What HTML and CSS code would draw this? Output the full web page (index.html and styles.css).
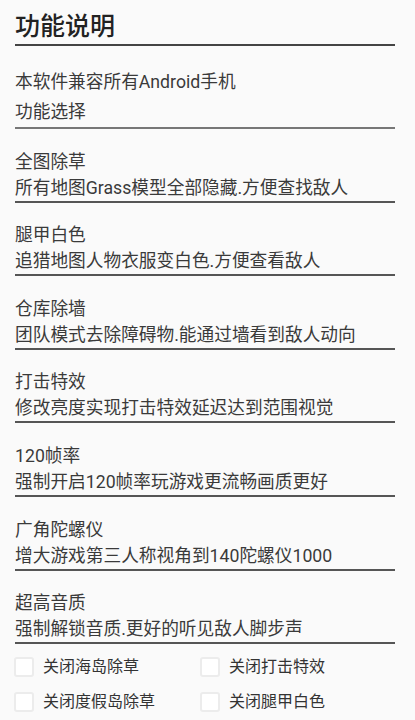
FILE: index.html
```html
<!DOCTYPE html>
<html lang="zh-CN">
  <head>
    <meta charset="UTF-8" />
    <meta name="viewport" content="width=device-width, initial-scale=1.0" />
    <title>功能说明</title>
    <link rel="stylesheet" href="styles.css">
  </head>
  <body>
    <div class="page">
      <!-- Header -->
      <h1 class="page-title">功能说明</h1>

      <!-- Intro -->
      <div class="intro">
        <p>本软件兼容所有Android手机</p>
        <p>功能选择</p>
      </div>

      <!-- Feature list -->
      <div class="feature">
        <h2>全图除草</h2>
        <p>所有地图Grass模型全部隐藏.方便查找敌人</p>
      </div>
      <div class="feature">
        <h2>腿甲白色</h2>
        <p>追猎地图人物衣服变白色.方便查看敌人</p>
      </div>
      <div class="feature">
        <h2>仓库除墙</h2>
        <p>团队模式去除障碍物.能通过墙看到敌人动向</p>
      </div>
      <div class="feature">
        <h2>打击特效</h2>
        <p>修改亮度实现打击特效延迟达到范围视觉</p>
      </div>
      <div class="feature">
        <h2>120帧率</h2>
        <p>强制开启120帧率玩游戏更流畅画质更好</p>
      </div>
      <div class="feature">
        <h2>广角陀螺仪</h2>
        <p>增大游戏第三人称视角到140陀螺仪1000</p>
      </div>
      <div class="feature">
        <h2>超高音质</h2>
        <p>强制解锁音质.更好的听见敌人脚步声</p>
      </div>

      <!-- Options -->
      <div class="options">
        <label class="option"><span class="box"></span>关闭海岛除草</label>
        <label class="option"><span class="box"></span>关闭打击特效</label>
        <label class="option"><span class="box"></span>关闭度假岛除草</label>
        <label class="option"><span class="box"></span>关闭腿甲白色</label>
      </div>
    </div>
  </body>
</html>
```

FILE: styles.css
```css
/* Base styles */
* {
  margin: 0;
  padding: 0;
  box-sizing: border-box;
}

body {
  font-family: Roboto, "Noto Sans CJK SC", sans-serif;
  background: #fafafa;
  color: #3a3a3a;
  overflow: hidden;
}

/* Layout */
.page {
  padding: 0 20px 0 15px;
}

/* Header */
.page-title {
  padding-top: 9px;
  font-size: 25px;
  font-weight: 500;
  line-height: 35px;
  color: #222;
  border-bottom: 2px solid #444;
}

/* Intro */
.intro {
  padding-top: 22px;
  border-bottom: 2px solid #777;
}

.intro p {
  font-size: 17.7px;
  line-height: 29.5px;
}

/* Feature list */
.feature {
  padding-top: 19.6px;
  border-bottom: 2px solid #555;
}

.feature h2 {
  font-size: 17.7px;
  font-weight: normal;
  line-height: 27px;
}

.feature p {
  font-size: 17.7px;
  line-height: 25px;
}

/* Options */
.options {
  display: grid;
  grid-template-columns: 186px 1fr;
  row-gap: 15px;
  padding-top: 13px;
  margin-left: -1px;
}

.option {
  display: flex;
  align-items: center;
  gap: 9px;
  font-size: 16px;
  line-height: 20px;
  color: #333;
}

.box {
  width: 20px;
  height: 20px;
  border: 2px solid #ececec;
  border-radius: 3px;
  background: #fff;
}
```
